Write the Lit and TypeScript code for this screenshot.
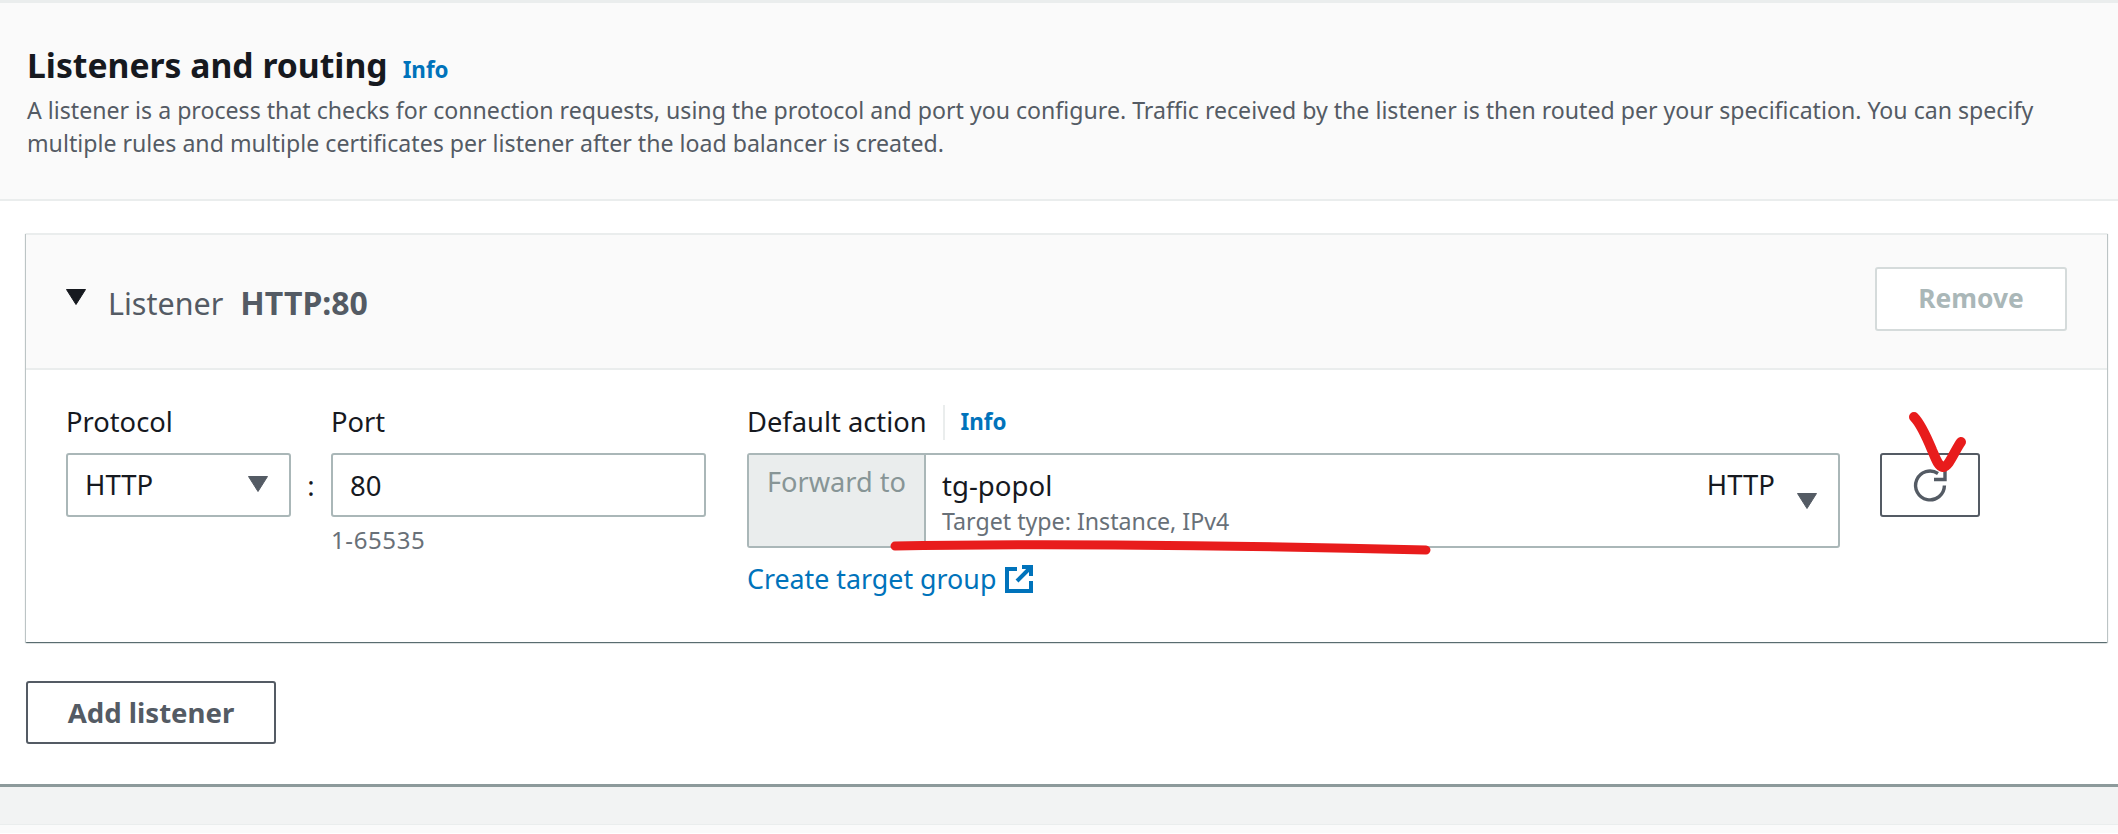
import { LitElement, html, css, svg } from "lit";
import { customElement } from "lit/decorators.js";

const caret = (cls: string) => html`<svg class=${cls} viewBox="0 0 20 16"><path d="M0.5 0.5H19.5L10 15.5Z" fill="currentColor" stroke="currentColor" stroke-linejoin="round"/></svg>`;

@customElement("app-root")
export class AppRoot extends LitElement {
  static styles = css`
    :host { display: block; position: relative; height: 834px; overflow: hidden; background: #fff;
      font-family: "Noto Sans", sans-serif; color: #16191f; font-size: 23px; }
    * { box-sizing: border-box; }
    .head { margin-top: 3px; height: 198px; background: #fafafa; border-bottom: 2px solid #eaeded;
      padding: 41px 27px 0; box-shadow: 0 -3px 0 #eaeded; }
    .title { display: flex; align-items: baseline; gap: 15px; height: 42px; line-height: 42px; }
    h2 { margin: 0; font-size: 33.7px; font-weight: 700; }
    .info { color: #0073bb; font-weight: 700; font-size: 22.4px; text-decoration: none; }
    .desc { margin: 8px 0 0; color: #545b64; font-size: 23.13px; line-height: 32.5px; }
    .card { margin: 32px 11px 0 26px; height: 409px; border-top: 2px solid #eaeded; background: #fff;
      box-shadow: 0 1px 1px rgba(0,28,36,.45), 1px 1px 1px rgba(0,28,36,.2), -1px 1px 1px rgba(0,28,36,.2); }
    .card-head { height: 135px; background: #fafafa; border-bottom: 2px solid #eaeded; display: flex;
      align-items: flex-start; padding: 32px 40px 0 40px; }
    .tri { width: 20px; height: 16px; color: #16191f; margin-top: 22px; flex: none; }
    .listener { margin-left: 22px; margin-top: 15px; font-size: 30.5px; line-height: 42px; color: #545b64; }
    .listener b { margin-left: 17px; font-size: 32px; font-weight: 700; }
    .remove { margin-left: auto; width: 192px; height: 64px; background: #fff; border: 2px solid #d5dbdb; border-radius: 3px;
      color: #aab7b8; font: 700 26.4px "Noto Sans", sans-serif; padding: 0 0 3px; }
    .card-body { display: flex; padding: 36px 0 0 40px; }
    label { display: flex; height: 32px; line-height: 32px; font-size: 27.3px; margin-bottom: 15px; align-items: center; }
    .field { width: 225px; }
    .ctrl { height: 64px; border: 2px solid #aab7b8; border-radius: 3px; background: #fff; font-size: 27.5px; }
    .select { display: flex; align-items: center; justify-content: space-between; padding: 0 21px 2px 17px; }
    .select .arrow, .target .arrow { width: 20px; height: 16px; color: #545b64; flex: none; }
    .colon { width: 40px; padding-top: 64px; text-align: center; font-size: 27.5px; line-height: 32px; }
    .port { width: 375px; }
    .input { display: flex; align-items: center; padding: 0 0 0 17px; }
    .hint { margin-top: 8px; line-height: 30px; font-size: 24px; letter-spacing: 0.6px; color: #687078; }
    .action { width: 1093px; margin-left: 41px; }
    .sep { width: 2px; height: 35px; background: #eaeded; margin: 0 16px 0 16px; }
    .info.small { font-size: 22.4px; }
    .target { height: 95px; display: flex; padding: 0; overflow: hidden; }
    .fwd { width: 177px; background: #eaeded; border-right: 2px solid #aab7b8; color: #879596; text-align: center;
      padding-top: 11px; line-height: 32px; font-size: 27.2px; }
    .tg { flex: 1; padding: 14px 0 0 16px; }
    .tg-name { line-height: 32px; font-size: 27.6px; }
    .tg-sub { margin-top: 6px; line-height: 28px; font-size: 23.2px; color: #687078; }
    .proto { display: flex; flex-direction: column; align-items: flex-end; padding: 14px 22px 0 0; }
    .proto span { line-height: 32px; font-size: 27.5px; margin-right: 41px; }
    .proto .arrow { margin-top: -8px; margin-right: -1px; }
    .create { margin-top: 15px; display: flex; align-items: center; gap: 9px; color: #0073bb; font-size: 26.8px; line-height: 32px; }
    .create svg { width: 28px; height: 28px; }
    .refresh { margin: 47px 0 0 40px; width: 100px; height: 64px; border: 2px solid #545b64; border-radius: 3px;
      background: #fff; display: flex; align-items: center; justify-content: center; padding: 0; }
    .refresh svg { width: 36px; height: 36px; }
    .add { display: block; margin: 39px 0 0 26px; width: 250px; height: 63px; background: #fff; border: 2px solid #545b64;
      border-radius: 3px; color: #545b64; font: 700 27.6px "Noto Sans", sans-serif; padding: 0 0 2px; }
    .foot { margin-top: 40px; height: 41px; background: #f2f3f3; border-top: 3px solid #8d9a9b; border-bottom: 1px solid #eaeded; }
    .end { height: 8px; background: #fafafa; }
    .ink { position: absolute; left: 0; top: 0; width: 2118px; height: 834px; pointer-events: none; }
  `;

  render() {
    return html`
      <section class="head">
        <div class="title"><h2>Listeners and routing</h2><a class="info">Info</a></div>
        <p class="desc">A listener is a process that checks for connection requests, using the protocol and port you configure. Traffic received by the listener is then routed per your specification. You can specify<br>multiple rules and multiple certificates per listener after the load balancer is created.</p>
      </section>
      <section class="card">
        <div class="card-head">
          ${caret("tri")}
          <div class="listener">Listener<b>HTTP:80</b></div>
          <button class="remove">Remove</button>
        </div>
        <div class="card-body">
          <div class="field">
            <label>Protocol</label>
            <div class="ctrl select"><span>HTTP</span>${caret("arrow")}</div>
          </div>
          <div class="colon">:</div>
          <div class="port">
            <label>Port</label>
            <div class="ctrl input">80</div>
            <div class="hint">1-65535</div>
          </div>
          <div class="action">
            <label>Default action<span class="sep"></span><a class="info small">Info</a></label>
            <div class="ctrl target">
              <div class="fwd">Forward to</div>
              <div class="tg"><div class="tg-name">tg-popol</div><div class="tg-sub">Target type: Instance, IPv4</div></div>
              <div class="proto"><span>HTTP</span>${caret("arrow")}</div>
            </div>
            <a class="create">Create target group
              <svg viewBox="0 0 28 28" fill="none" stroke="#0073bb" stroke-width="4"><path d="M12 4H2V26H26V16"/><path d="M17 2H26V11"/><path d="M26 2L12 16"/></svg>
            </a>
          </div>
          <button class="refresh" aria-label="Refresh">
            <svg viewBox="0 0 36 36" fill="none" stroke="#545b64" stroke-width="3.4"><path d="M32.4 18.5A14.4 14.4 0 1 1 26 6.5"/><path d="M22 12.5H33V2"/></svg>
          </button>
        </div>
      </section>
      <button class="add">Add listener</button>
      <div class="foot"></div>
      <div class="end"></div>
      <svg class="ink" viewBox="0 0 2118 834" fill="none" stroke="#e81c1c" stroke-linecap="round" stroke-linejoin="round">
        ${svg`<path d="M895 546 C 1000 544 1200 544 1426 550" stroke-width="9"/>`}
        ${svg`<path d="M1914 417 C1921 424 1927 438 1932 450 C1936 459 1938 466 1943 467 C1949 467 1955 450 1961 442" stroke-width="10"/>`}
      </svg>
    `;
  }
}
